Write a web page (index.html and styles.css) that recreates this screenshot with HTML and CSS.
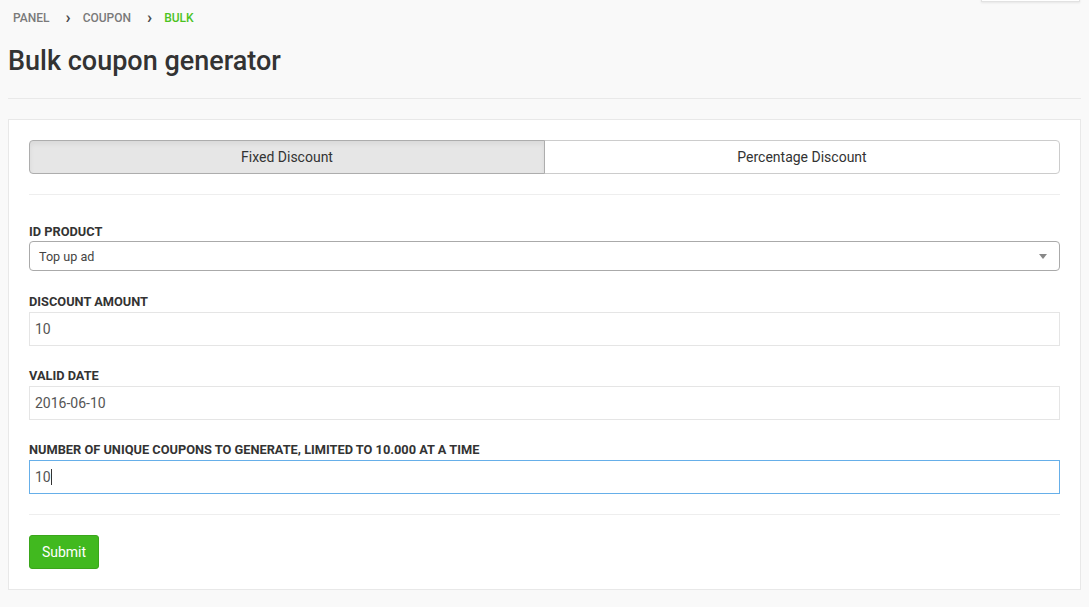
FILE: index.html
```html
<!DOCTYPE html>
<html>
<head>
<meta charset="utf-8">
<link rel="stylesheet" href="styles.css">
</head>
<body>
<div class="topbox"></div>
<nav class="crumbs">
  <span class="crumb">Panel</span>
  <span class="sep">&#8250;</span>
  <span class="crumb">Coupon</span>
  <span class="sep">&#8250;</span>
  <span class="crumb current">Bulk</span>
</nav>
<h1 class="title">Bulk coupon generator</h1>
<hr class="rule">
<div class="card">
  <div class="tabs">
    <button class="tab active">Fixed Discount</button>
    <button class="tab">Percentage Discount</button>
  </div>
  <hr class="divider">
  <div class="group first">
    <label class="label">ID Product</label>
    <div class="select"><span>Top up ad</span><span class="arrow"></span></div>
  </div>
  <div class="group">
    <label class="label">Discount amount</label>
    <div class="input">10</div>
  </div>
  <div class="group">
    <label class="label">Valid date</label>
    <div class="input">2016-06-10</div>
  </div>
  <div class="group last">
    <label class="label">Number of unique coupons to generate, limited to 10.000 at a time</label>
    <div class="input focus">10<span class="caret"></span></div>
  </div>
  <hr class="divider">
  <button class="submit">Submit</button>
</div>
</body>
</html>
```
FILE: styles.css
```css
html, body { margin: 0; padding: 0; }
body {
  background: #f9f9f9;
  font-family: Roboto, "Liberation Sans", sans-serif;
  color: #333;
  padding: 8px;
  position: relative;
  min-height: 591px;
  box-sizing: border-box;
}
.topbox {
  position: absolute;
  top: -20px;
  right: 9px;
  width: 97px;
  height: 20px;
  background: #fff;
  border: 1px solid #e2e2e2;
  box-shadow: 0 1px 2px rgba(0,0,0,0.08);
}
.crumbs {
  display: flex;
  align-items: center;
  padding-left: 5px;
  height: 20px;
  font-size: 12px;
  font-weight: 500;
  text-transform: uppercase;
  color: #7a7a7a;
}
.sep {
  font-size: 17px;
  font-weight: 700;
  color: #4a4a4a;
  margin: -3px 12px 0 16px;
}
.current { color: #4cc31f; }
.title {
  margin: 15px 0 0 0;
  font-size: 27px;
  font-weight: 500;
  line-height: 36px;
  color: #333;
}
.rule {
  border: 0;
  border-top: 1px solid #e9e9e9;
  margin: 19px 0 20px;
}
.card {
  background: #fff;
  border: 1px solid #e8e8e8;
  padding: 20px;
}
.tabs { display: flex; }
.tab {
  flex: 1;
  height: 34px;
  font-family: inherit;
  font-size: 14px;
  color: #333;
  background: #fff;
  border: 1px solid #ccc;
  margin: 0;
  padding: 0;
}
.tab:first-child { border-radius: 4px 0 0 4px; }
.tab:last-child { border-radius: 0 4px 4px 0; margin-left: -1px; }
.tab.active {
  background: #e6e6e6;
  border-color: #adadad;
  box-shadow: inset 0 3px 5px rgba(0,0,0,0.06);
  position: relative;
  z-index: 1;
}
.divider {
  border: 0;
  border-top: 1px solid #eee;
  margin: 20px 0;
}
.group { margin-bottom: 22px; }
.group.first { padding-top: 9px; margin-bottom: 23px; }
.group.last { margin-bottom: 0; }
.label {
  display: block;
  font-size: 12.8px;
  font-weight: 700;
  line-height: 16px;
  text-transform: uppercase;
  margin-bottom: 2px;
  color: #333;
}
.select {
  height: 30px;
  margin-top: -1px;
  box-sizing: border-box;
  border: 1px solid #aaa;
  border-radius: 4px;
  display: flex;
  align-items: center;
  justify-content: space-between;
  padding: 0 12px 0 9px;
  font-size: 12.6px;
  color: #444;
}
.arrow {
  width: 0; height: 0;
  border-left: 4px solid transparent;
  border-right: 4px solid transparent;
  border-top: 5px solid #888;
}
.input {
  height: 34px;
  box-sizing: border-box;
  border: 1px solid #e5e5e5;
  display: flex;
  align-items: center;
  padding: 0 5px;
  font-size: 14px;
  color: #555;
}
.input.focus { border-color: #66afe9; }
.caret {
  display: inline-block;
  width: 1px;
  height: 16px;
  background: #333;
}
.submit {
  height: 34px;
  width: 70px;
  font-family: inherit;
  font-size: 14px;
  color: #fff;
  background: #41b91f;
  border: 1px solid #3aa61b;
  border-radius: 3px;
  padding: 0;
}
```
